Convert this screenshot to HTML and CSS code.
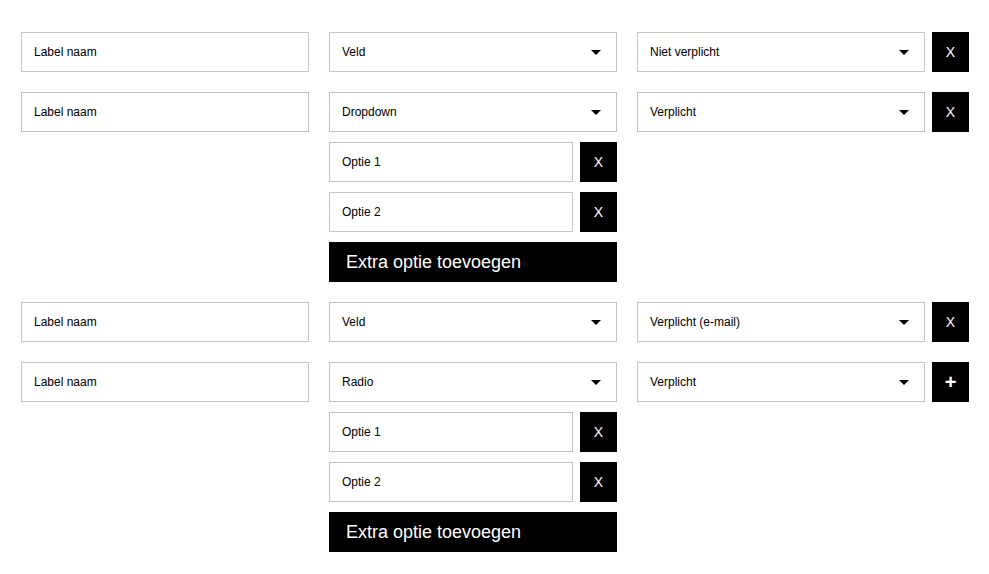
FILE: index.html
```html
<!DOCTYPE html>
<html lang="nl">
<head>
<meta charset="utf-8">
<title>Formulier velden</title>
<link rel="stylesheet" href="styles.css">
</head>
<body>
<div class="builder">
  <div class="field">
    <div class="input">Label naam</div>
    <div class="middle">
      <div class="select">Veld<span class="arrow"></span></div>
    </div>
    <div class="select">Niet verplicht<span class="arrow"></span></div>
    <div class="btn">X</div>
  </div>
  <div class="field">
    <div class="input">Label naam</div>
    <div class="middle">
      <div class="select">Dropdown<span class="arrow"></span></div>
      <div class="option"><div class="input">Optie 1</div><div class="btn">X</div></div>
      <div class="option"><div class="input">Optie 2</div><div class="btn">X</div></div>
      <div class="extra">Extra optie toevoegen</div>
    </div>
    <div class="select">Verplicht<span class="arrow"></span></div>
    <div class="btn">X</div>
  </div>
  <div class="field">
    <div class="input">Label naam</div>
    <div class="middle">
      <div class="select">Veld<span class="arrow"></span></div>
    </div>
    <div class="select">Verplicht (e-mail)<span class="arrow"></span></div>
    <div class="btn">X</div>
  </div>
  <div class="field">
    <div class="input">Label naam</div>
    <div class="middle">
      <div class="select">Radio<span class="arrow"></span></div>
      <div class="option"><div class="input">Optie 1</div><div class="btn">X</div></div>
      <div class="option"><div class="input">Optie 2</div><div class="btn">X</div></div>
      <div class="extra">Extra optie toevoegen</div>
    </div>
    <div class="select">Verplicht<span class="arrow"></span></div>
    <div class="btn plus">+</div>
  </div>
</div>
</body>
</html>
```
FILE: styles.css
```css
html, body {
  margin: 0;
  padding: 0;
  background: #fff;
}
body {
  font-family: "Liberation Sans", Arial, sans-serif;
  font-size: 12px;
  color: #000;
}
.builder {
  padding: 32px 0 0 21px;
  display: flex;
  flex-direction: column;
  gap: 20px;
}
.field {
  display: grid;
  grid-template-columns: 288px 288px 288px 37px;
  column-gap: 20px;
  align-items: start;
}
.field > .btn {
  margin-left: -13px;
}
.middle {
  display: flex;
  flex-direction: column;
  gap: 10px;
}
.input, .select {
  box-sizing: border-box;
  height: 40px;
  border: 1px solid #c4c4c4;
  padding: 0 12px;
  display: flex;
  align-items: center;
  background: #fff;
}
.select {
  position: relative;
}
.arrow {
  position: absolute;
  right: 15px;
  top: 17px;
  width: 0;
  height: 0;
  border-left: 5px solid transparent;
  border-right: 5px solid transparent;
  border-top: 5px solid #000;
}
.option {
  display: grid;
  grid-template-columns: 244px 37px;
  column-gap: 7px;
}
.btn {
  width: 37px;
  height: 40px;
  background: #000;
  color: #fff;
  font-size: 14px;
  display: flex;
  align-items: center;
  justify-content: center;
}
.btn.plus {
  font-size: 20px;
  font-weight: bold;
}
.extra {
  height: 40px;
  background: #000;
  color: #fff;
  font-size: 18px;
  padding: 0 17px;
  display: flex;
  align-items: center;
}
```
